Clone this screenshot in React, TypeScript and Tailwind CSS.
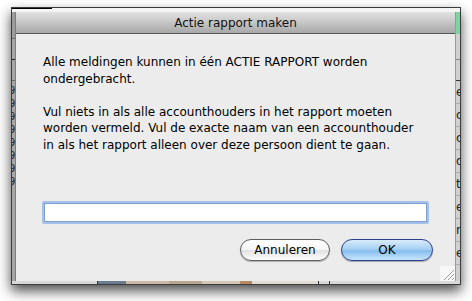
const font = { fontFamily: '"DejaVu Sans", "Liberation Sans", sans-serif' };

function LeftStrip() {
  return (
    <div className="flex flex-col bg-[#a6a6a6] border-r border-[#7c7c7c]">
      <div className="h-[27px] border-b border-[#6a6a6a] bg-[#9c9c9c]" />
      <div className="h-[21px] border-b border-[#222]" />
      <div className="h-[21px] border-b border-[#6a6a6a]" />
      <div className="flex flex-col pt-[3px]">
        {Array.from({ length: 8 }).map((_, i) => (
          <span key={i} className="h-[13px] overflow-hidden text-[10px] leading-[13px] text-[#222] -ml-[3px]">
            9
          </span>
        ))}
      </div>
    </div>
  );
}

function RightStrip() {
  const bits = ["e", "c", "c", "d", "ti", "e", "r", "e"];
  return (
    <div className="flex flex-col overflow-hidden bg-[#d0d0d0] border-l border-[#9a9a9a]">
      <div className="h-[22px] shrink-0 bg-[#7fd3a2]" />
      <div className="h-[26px] shrink-0 border-b border-[#888]" />
      <div className="h-[21px] shrink-0 border-b border-[#333]" />
      <div className="flex flex-col">
        {bits.map((b, i) => (
          <div key={i} className="h-[23px] shrink-0 border-b border-[#aaa] text-[12px] leading-[23px] text-[#222] whitespace-nowrap">
            {b}
          </div>
        ))}
      </div>
    </div>
  );
}

function Grip() {
  return (
    <svg className="absolute right-0 bottom-0" width="15" height="15" viewBox="0 0 15 15">
      <rect width="15" height="15" fill="#f7f7f7" />
      <path d="M14 4 L4 14 M14 8 L8 14 M14 12 L12 14" stroke="#9a9a9a" strokeWidth="1" />
      <path d="M14 5 L5 14 M14 9 L9 14" stroke="#ffffff" strokeWidth="1" />
    </svg>
  );
}

function Sheet() {
  return (
    <div className="relative flex flex-col bg-[#ececec]" style={font}>
      <div className="h-[22px] shrink-0 flex items-center justify-center border-b border-[#555] bg-[linear-gradient(to_bottom,#e2e2e2,#a8a8a8)] text-[12px] text-[#111]">
        Actie rapport maken
      </div>
      <div className="flex flex-col px-[26px] pt-[20px]">
        <div className="pl-px text-[12px] leading-[16.5px] text-black">
          <p>Alle meldingen kunnen in één ACTIE RAPPORT worden</p>
          <p>ondergebracht.</p>
          <p className="mt-[16.5px]">Vul niets in als alle accounthouders in het rapport moeten</p>
          <p>worden vermeld. Vul de exacte naam van een accounthouder</p>
          <p>in als het rapport alleen over deze persoon dient te gaan.</p>
        </div>
        <div className="mt-[48px] h-[23px] rounded-[2px] border-2 border-[#a3c1e9] bg-white">
          <div className="h-full border border-[#7d9fd2] bg-white" />
        </div>
        <div className="mt-[15px] -mr-[4px] flex justify-end gap-[11px]">
          <button className="h-[22px] w-[90px] rounded-full border border-[#5e5e5e] bg-[linear-gradient(to_bottom,#ffffff_0%,#f4f4f4_50%,#e2e2e2_51%,#fbfbfb_100%)] text-[12px] text-black shadow-[0_1px_1px_rgba(0,0,0,0.25)]">
            Annuleren
          </button>
          <button className="h-[22px] w-[92px] rounded-full border border-[#2f3f8f] bg-[linear-gradient(to_bottom,#d9ecfb_0%,#a7d0f3_45%,#86bdef_55%,#c8e7fd_100%)] text-[12px] text-black shadow-[0_1px_1px_rgba(0,0,0,0.3)]">
            OK
          </button>
        </div>
      </div>
      <Grip />
    </div>
  );
}

export default function App() {
  return (
    <div className="h-[301px] w-[472px] overflow-hidden bg-white pl-[11px] pt-[7px]" style={font}>
      <div className="grid h-[278px] w-[450px] grid-cols-[4px_439px_5px] grid-rows-[4px_269px_3px] overflow-hidden border border-[#3c3c3c] bg-[#cfcfcf] shadow-[0_6px_12px_rgba(0,0,0,0.7)]">
        <div className="col-span-3 flex flex-col bg-[#f4f4f4]">
          <div className="h-px w-[40px] bg-black" />
        </div>
        <LeftStrip />
        <Sheet />
        <RightStrip />
        <div className="col-span-3 flex bg-[#d8d8d8]">
          <div className="w-[90px] border-r border-[#333]" />
          <div className="w-[30px] bg-[#6c7c90]" />
          <div className="w-[45px] bg-[#c9b9a6]" />
          <div className="w-[35px] bg-[#b9a690]" />
          <div className="w-[40px] bg-[#d3c6b4]" />
          <div className="w-[12px] bg-[#b58a64]" />
          <div className="w-[70px] bg-[#e2dbd2]" />
          <div className="w-[12px] border-x border-[#333]" />
          <div className="flex-1 overflow-hidden text-[10px] leading-[3px] text-black whitespace-nowrap pl-[130px]">Gemarkeerde</div>
        </div>
      </div>
    </div>
  );
}
